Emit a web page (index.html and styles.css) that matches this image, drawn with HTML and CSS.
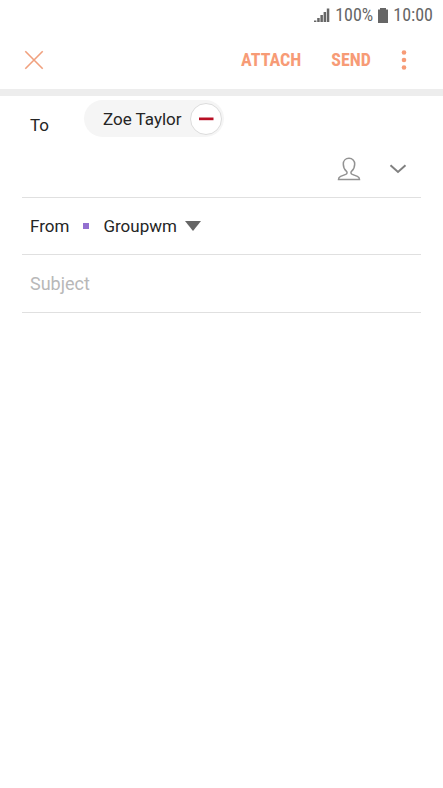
FILE: index.html
```
<!DOCTYPE html>
<html lang="en">
<head>
<meta charset="utf-8">
<meta name="viewport" content="width=device-width, initial-scale=1">
<title>Compose</title>
<link rel="stylesheet" href="styles.css">
</head>
<body>
<div class="status">
  <svg width="16" height="14" viewBox="0 0 16 14" aria-hidden="true"><path d="M0 12.500h2.400V14H0zM3.200 10h2.500v4H3.200zM6.400 7h2.500v7H6.400zM9.600 4h2.500v10H9.600zM12.800 .5h2.500V14h-2.500z"/></svg>
  <span>100%</span>
  <svg width="10" height="15" viewBox="0 0 10 15" aria-hidden="true"><path d="M2 0h6v1.500h2V15H0V1.500h2z"/></svg>
  <span>10:00</span>
</div>
<header class="bar">
  <button class="close" type="button" aria-label="Close"><svg width="20" height="20" viewBox="0 0 20 20"><path d="M1.3 1.3l17.4 17.4M18.7 1.3L1.3 18.7"/></svg></button>
  <button class="action" type="button">ATTACH</button>
  <button class="action" type="button">SEND</button>
  <button class="more" type="button" aria-label="More options"><svg width="6" height="20" viewBox="0 0 6 20"><circle cx="3" cy="2.500" r="2.300"/><circle cx="3" cy="10" r="2.300"/><circle cx="3" cy="17.500" r="2.300"/></svg></button>
</header>
<main class="form">
  <div class="row to">
    <label class="label" for="to">To</label>
    <div class="chip"><span>Zoe Taylor</span><button class="remove" type="button" aria-label="Remove Zoe Taylor"><svg width="16" height="4" viewBox="0 0 16 4"><path d="M1 .5h14.500v2.700H1z"/></svg></button></div>
    <div class="entry">
      <input id="to" class="field" type="text">
      <button class="icon" type="button" aria-label="Contacts"><svg width="24" height="24" viewBox="0 0 24 24"><path d="M12 1.300C8.500 1.300 6.300 3.700 6.300 7c0 3 1.200 5.600 3 7.100 1.200 1.100 1 2.600-.6 3.300L3.600 19.400c-1.400.6-2.100 1.600-2.100 3.200h21c0-1.600-.7-2.600-2.100-3.200l-5.100-2c-1.600-.7-1.800-2.200-.6-3.300 1.800-1.500 3-4.100 3-7.100 0-3.300-2.200-5.700-5.700-5.700z"/></svg></button>
      <button class="icon expand" type="button" aria-label="Show Cc and Bcc"><svg width="18" height="10" viewBox="0 0 18 10"><path d="M1.500 1.300L9 8l7.500-6.700"/></svg></button>
    </div>
  </div>
  <div class="row from">
    <label class="label" for="from">From</label>
    <span class="mark"></span>
    <select id="from" class="account"><option>Groupwm</option></select>
    <svg class="arrow" width="16" height="10" viewBox="0 0 16 10" aria-hidden="true"><path d="M0 0h16L8 10z"/></svg>
  </div>
  <div class="row">
    <input class="field subject" type="text" placeholder="Subject" aria-label="Subject">
  </div>
</main>
</body>
</html>
```
FILE: styles.css
```
* {
  box-sizing: border-box;
}

body {
  margin: 0;
  background: #fff;
  color: #252525;
  font: 17px/24px Roboto, "Liberation Sans", sans-serif;
}

button,
input,
select {
  margin: 0;
  padding: 0;
  border: 0;
  background: none;
  color: inherit;
  font: inherit;
  outline: 0;
}

svg {
  display: block;
}

.status {
  display: flex;
  align-items: center;
  justify-content: flex-end;
  height: 30px;
  padding: 0 10px;
  gap: 5px;
  color: #666;
  font-family: "Roboto Condensed", Roboto, sans-serif;
  font-size: 18px;
}

.status svg {
  fill: #666;
}

.bar {
  display: flex;
  align-items: center;
  height: 66px;
  padding: 0 36px 0 24px;
  border-bottom: 7px solid #ededed;
  color: #f79b76;
}

.close {
  margin-right: auto;
}

.close svg {
  fill: none;
  stroke: #f0a07e;
  stroke-width: 1.6;
}

.action {
  margin-right: 30px;
  font-family: "Roboto Condensed", Roboto, sans-serif;
  font-size: 18px;
  font-weight: 700;
}

.more svg {
  fill: #f79b76;
}

.form {
  margin: 0 22px;
}

.row {
  display: flex;
  align-items: center;
  height: 58px;
  padding: 0 8px;
  border-bottom: 1px solid #e0e0e0;
}

.to {
  display: grid;
  grid-template-columns: 54px 1fr;
  grid-template-rows: 45px 56px;
  height: auto;
  padding-right: 14px;
}

.to .label {
  padding-top: 12px;
}

.chip {
  display: flex;
  align-items: center;
  justify-self: start;
  gap: 8px;
  height: 37px;
  padding: 0 2px 0 19px;
  border-radius: 19px;
  background: #f5f5f5;
}

.remove {
  display: grid;
  place-items: center;
  width: 32px;
  height: 32px;
  border: 1px solid #dcdcdc;
  border-radius: 50%;
  background: #fff;
}

.remove svg {
  fill: #b80f24;
}

.entry {
  display: flex;
  align-items: center;
  grid-column: 2;
}

.field {
  flex: 1;
  min-width: 0;
}

.icon svg {
  fill: none;
  stroke: #929292;
  stroke-width: 1.5;
}

.expand {
  margin-left: 28px;
}

.expand svg {
  stroke: #808080;
  stroke-width: 2;
}

.from {
  height: 57px;
}

.mark {
  width: 6px;
  height: 6px;
  margin: 0 14px;
  background: #9370d0;
}

.account {
  appearance: none;
}

.arrow {
  margin-left: 8px;
  fill: #666;
}

.subject {
  font-size: 18px;
}

.subject::placeholder {
  color: #b8b8b8;
  opacity: 1;
}
```
